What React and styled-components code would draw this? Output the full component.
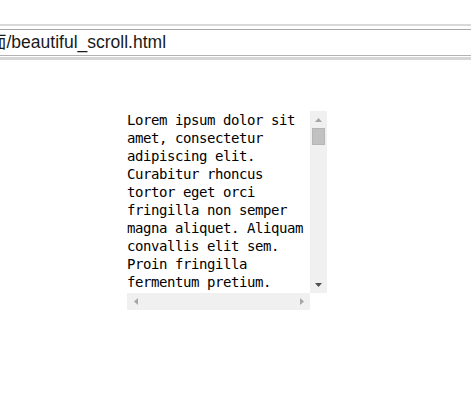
import React from "react";
import styled, { createGlobalStyle } from "styled-components";

const Global = createGlobalStyle`
  html, body { margin: 0; padding: 0; background: #ffffff; }
  body { width: 471px; height: 417px; overflow: hidden; }
`;

const Page = styled.div`
  display: flex;
  flex-direction: column;
  width: 471px;
`;

const AddressBar = styled.div`
  margin-top: 24px;
  border-top: 2px solid #d9d9d9;
  border-bottom: 3px solid #d6d6d6;
  padding: 3px 0 1px;
`;

const Field = styled.div`
  border-top: 1px solid #a9a9a9;
  border-bottom: 1px solid #b3b3b3;
  height: 25px;
  overflow: hidden;
  background: #ffffff;
`;

const Url = styled.div`
  margin-left: -11px;
  font-family: "Liberation Sans", "Noto Sans CJK SC", sans-serif;
  font-size: 17.5px;
  line-height: 25px;
  color: #1a1a1a;
  white-space: nowrap;
`;

const ScrollBox = styled.div`
  margin: 51px 0 0 127px;
  display: grid;
  grid-template-columns: 183px 17px;
  grid-template-rows: 182px 17px;
  width: 200px;
`;

const Content = styled.div`
  overflow: hidden;
  font-family: "DejaVu Sans Mono", monospace;
  font-size: 14px;
  letter-spacing: -0.43px;
  line-height: 18px;
  color: #000000;
  word-wrap: break-word;
`;

const VTrack = styled.div`
  background: #f0f0f0;
  display: flex;
  flex-direction: column;
  align-items: center;
`;

const HTrack = styled.div`
  background: #f0f0f0;
  display: flex;
  align-items: center;
  justify-content: space-between;
`;

const ArrowButton = styled.div`
  width: 17px;
  height: 17px;
  display: flex;
  align-items: center;
  justify-content: center;
  flex: none;
`;

const Thumb = styled.div`
  width: 13px;
  height: 17px;
  box-sizing: border-box;
  background: #c1c1c1;
  border: 1px solid #b5b5b5;
`;

const Spacer = styled.div`
  flex: 1;
`;

const Corner = styled.div`
  background: #ffffff;
`;

const Arrow = ({ dir, color }) => {
  const pts = {
    up: "0,4 3.5,0 7,4",
    down: "0,0 7,0 3.5,4",
    left: "4,0 4,7 0,3.5",
    right: "0,0 0,7 4,3.5",
  }[dir];
  const horizontal = dir === "left" || dir === "right";
  return (
    <svg width={horizontal ? 4 : 7} height={horizontal ? 7 : 4} viewBox={horizontal ? "0 0 4 7" : "0 0 7 4"}>
      <polygon points={pts} fill={color} />
    </svg>
  );
};

const text =
  "Lorem ipsum dolor sit amet, consectetur adipiscing elit. Curabitur rhoncus tortor eget orci fringilla non semper magna aliquet. Aliquam convallis elit sem. Proin fringilla fermentum pretium. Suspendisse potenti. Etiam nec lacus at nisl tincidunt.";

export default function App() {
  return (
    <Page>
      <Global />
      <AddressBar>
        <Field>
          <Url>面/beautiful_scroll.html</Url>
        </Field>
      </AddressBar>
      <ScrollBox>
        <Content>{text}</Content>
        <VTrack>
          <ArrowButton>
            <Arrow dir="up" color="#a6a6a6" />
          </ArrowButton>
          <Thumb />
          <Spacer />
          <ArrowButton>
            <Arrow dir="down" color="#505050" />
          </ArrowButton>
        </VTrack>
        <HTrack>
          <ArrowButton>
            <Arrow dir="left" color="#a6a6a6" />
          </ArrowButton>
          <ArrowButton>
            <Arrow dir="right" color="#a6a6a6" />
          </ArrowButton>
        </HTrack>
        <Corner />
      </ScrollBox>
    </Page>
  );
}
